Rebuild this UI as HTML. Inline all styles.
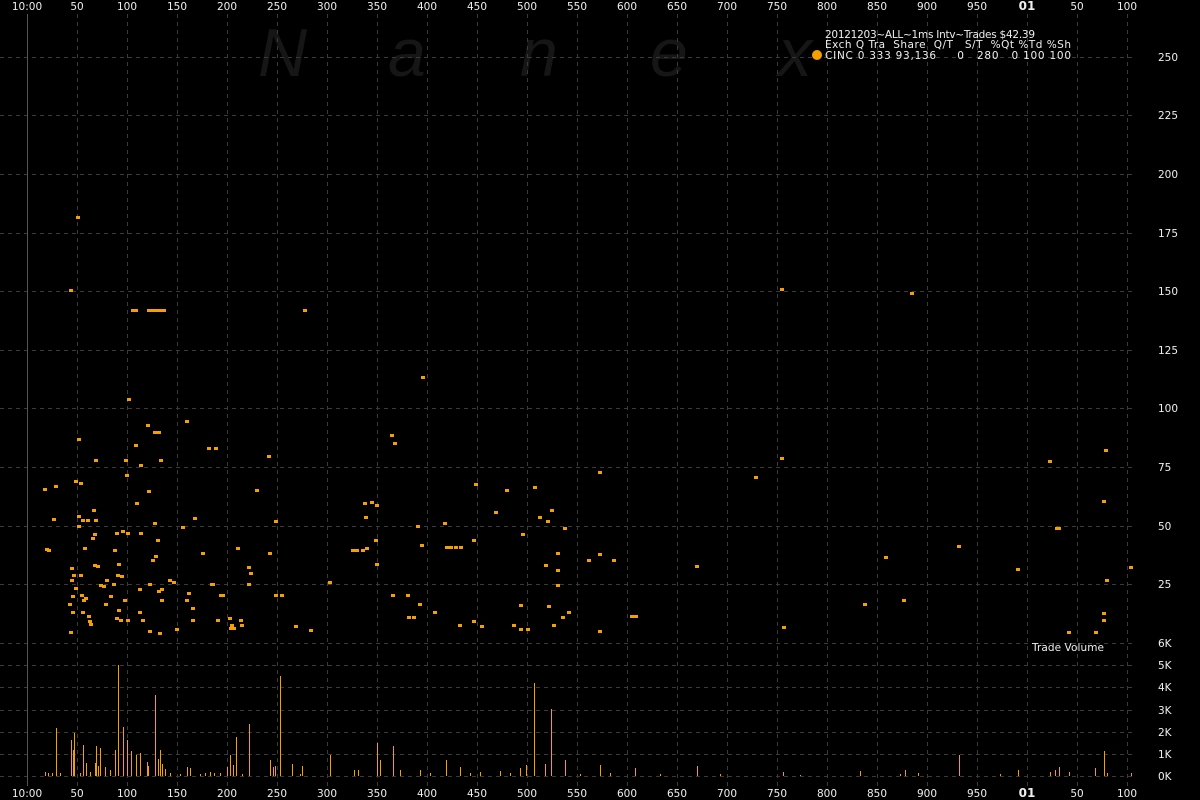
<!DOCTYPE html>
<html><head><meta charset="utf-8"><style>
html,body{margin:0;padding:0;background:#000;width:1200px;height:800px;overflow:hidden}
svg{display:block}
text{font-family:"DejaVu Sans","Liberation Sans",sans-serif;fill:#eee;white-space:pre}
</style></head><body>
<svg id="s" width="1200" height="800" viewBox="0 0 1200 800" xmlns="http://www.w3.org/2000/svg">
<rect width="1200" height="800" fill="#000"/>
<g font-style="italic" font-size="68">
<text x="258" y="76" style="fill:#161616;font-family:'Liberation Sans',sans-serif">N</text>
<text x="388" y="76" style="fill:#161616;font-family:'Liberation Sans',sans-serif">a</text>
<text x="520" y="76" style="fill:#161616;font-family:'Liberation Sans',sans-serif">n</text>
<text x="650" y="76" style="fill:#161616;font-family:'Liberation Sans',sans-serif">e</text>
<text x="778" y="76" style="fill:#161616;font-family:'Liberation Sans',sans-serif">x</text>
</g>
<g id="grid" stroke="#3a3a3a" stroke-width="1" stroke-dasharray="4,4"></g>
<line x1="27.5" y1="14" x2="27.5" y2="786" stroke="#555"/>
<g id="pts" fill="#f5a000"></g>
<g id="vol" fill="#f5a000"></g>
<g id="lab" font-size="10.5"></g>
<g font-size="10.5">
<text x="825" y="38" xml:space="preserve" textLength="210">20121203~ALL~1ms Intv~Trades $42.39</text>
<text x="825" y="48" xml:space="preserve" textLength="246">Exch Q Tra  Share  Q/T   S/T  %Qt %Td %Sh</text>
<text x="825" y="59" xml:space="preserve" textLength="246">CINC 0 333 93,136     0   280   0 100 100</text>
<circle cx="817" cy="55" r="5" fill="#f5a000"/>
<text x="1032" y="651" textLength="72">Trade Volume</text>
</g>
</svg>
<script>
var NS="http://www.w3.org/2000/svg";
function el(p,t,a,txt){var e=document.createElementNS(NS,t);for(var k in a)e.setAttribute(k,a[k]);if(txt!=null)e.textContent=txt;document.getElementById(p).appendChild(e);return e;}
for(var x=77;x<=1127;x+=50){el("grid","line",{x1:x+.5,y1:14,x2:x+.5,y2:786});}
var py=[57,115,174,233,291,350,408,467,526,584,643];
var pl=["250","225","200","175","150","125","100","75","50","25","6K"];
py.forEach(function(y,i){el("grid","line",{x1:0,y1:y+.5,x2:1135,y2:y+.5});el("lab","text",{x:1158,y:y+4},pl[i]);});
var vy=[665,687,710,732,754,776],vl=["5K","4K","3K","2K","1K","0K"];
vy.forEach(function(y,i){el("grid","line",{x1:0,y1:y+.5,x2:1135,y2:y+.5});el("lab","text",{x:1158,y:y+4},vl[i]);});
var xs=[[27,"10:00"],[77,"50"],[127,"100"],[177,"150"],[227,"200"],[277,"250"],[327,"300"],[377,"350"],[427,"400"],[477,"450"],[527,"500"],[577,"550"],[627,"600"],[677,"650"],[727,"700"],[777,"750"],[827,"800"],[877,"850"],[927,"900"],[977,"950"],[1027,"01"],[1077,"50"],[1127,"100"]];
xs.forEach(function(a){var b=a[1]=="01";
el("lab","text",{x:a[0],y:10,"text-anchor":"middle","font-weight":b?"bold":"normal","font-size":b?"12":"10.5"},a[1]);
el("lab","text",{x:a[0],y:797,"text-anchor":"middle","font-weight":b?"bold":"normal","font-size":b?"12":"10.5"},a[1]);});
var P=[[78,217],[71,290],[45,489],[54,519],[47,549],[49,550],[56,486],[79,439],[76,481],[81,483],[79,516],[83,520],[79,526],[88,520],[85,548],[94,510],[96,520],[93,538],[95,565],[72,568],[74,575],[72,580],[73,596],[70,604],[73,612],[71,632],[76,588],[81,575],[82,595],[84,600],[83,612],[86,598],[89,616],[90,621],[91,624],[95,534],[96,460],[98,566],[101,585],[104,586],[106,604],[107,580],[111,596],[114,584],[118,575],[115,550],[117,533],[119,564],[119,610],[117,618],[121,620],[123,531],[122,576],[125,600],[127,475],[128,533],[128,620],[126,460],[129,399],[133,310],[136,310],[136,445],[137,503],[141,465],[141,533],[140,589],[140,612],[143,620],[149,310],[152,310],[155,310],[158,310],[161,310],[164,310],[148,425],[149,491],[155,432],[155,523],[153,560],[150,584],[150,631],[159,432],[161,460],[158,540],[156,556],[159,591],[160,633],[162,589],[162,600],[170,580],[174,582],[177,629],[183,527],[187,421],[187,600],[189,593],[193,608],[193,620],[195,518],[203,553],[209,448],[212,584],[213,584],[216,448],[218,620],[221,595],[223,595],[230,618],[231,628],[232,625],[234,628],[238,548],[241,620],[242,625],[249,567],[251,573],[249,584],[257,490],[269,456],[270,553],[276,521],[276,595],[282,595],[296,626],[305,310],[311,630],[330,582],[353,550],[357,550],[363,550],[367,548],[365,503],[366,517],[372,502],[377,505],[376,540],[377,564],[392,435],[395,443],[393,595],[408,595],[409,617],[414,617],[418,526],[422,545],[420,604],[423,377],[435,612],[445,523],[447,547],[451,547],[456,547],[461,547],[476,484],[474,540],[460,625],[474,621],[507,490],[496,512],[523,534],[521,605],[521,629],[540,517],[548,521],[549,606],[546,565],[554,625],[552,510],[558,570],[558,585],[558,553],[514,625],[565,528],[569,612],[563,617],[535,487],[482,626],[528,629],[589,560],[600,472],[600,554],[600,631],[632,616],[636,616],[614,560],[697,566],[756,477],[782,289],[782,458],[784,627],[865,604],[886,557],[904,600],[912,293],[959,546],[1018,569],[1050,461],[1057,528],[1059,528],[1069,632],[1096,632],[1104,501],[1104,613],[1104,620],[1106,450],[1107,580],[1131,567]];
P.forEach(function(p){el("pts","rect",{x:p[0]-2,y:p[1]-1,width:4,height:3});});
var V=[[56,728],[118,665],[155,695],[280,676],[534,683],[551,709],[249,724],[236,737],[123,727],[377,743],[959,755],[1104,751],[393,746],[74,733],[71,740],[100,748],[96,746],[73,750],[83,745],[86,763],[95,763],[98,766],[105,767],[110,770],[115,750],[127,740],[131,751],[136,755],[140,753],[147,762],[148,766],[158,759],[160,750],[162,764],[165,769],[170,773],[180,774],[187,767],[190,768],[205,773],[210,772],[214,773],[227,767],[230,755],[233,765],[242,774],[270,760],[273,767],[275,766],[292,764],[302,766],[330,755],[354,770],[358,770],[380,760],[400,770],[420,770],[446,760],[460,767],[480,772],[500,771],[520,768],[526,765],[545,764],[565,760],[600,765],[635,768],[697,766],[783,772],[860,771],[905,770],[918,773],[1018,770],[1050,772],[1055,770],[1059,767],[1069,772],[1095,768],[1107,773],[1131,773],[45,772],[48,773],[52,773],[60,773],[80,773],[90,772],[200,774],[220,773],[300,774],[430,773],[470,773],[510,773],[580,774],[610,773],[660,774],[720,774],[800,775],[900,774],[1000,774]];
V.forEach(function(v){el("vol","rect",{x:v[0],y:v[1],width:1,height:776-v[1]});});
</script>
</body></html>
